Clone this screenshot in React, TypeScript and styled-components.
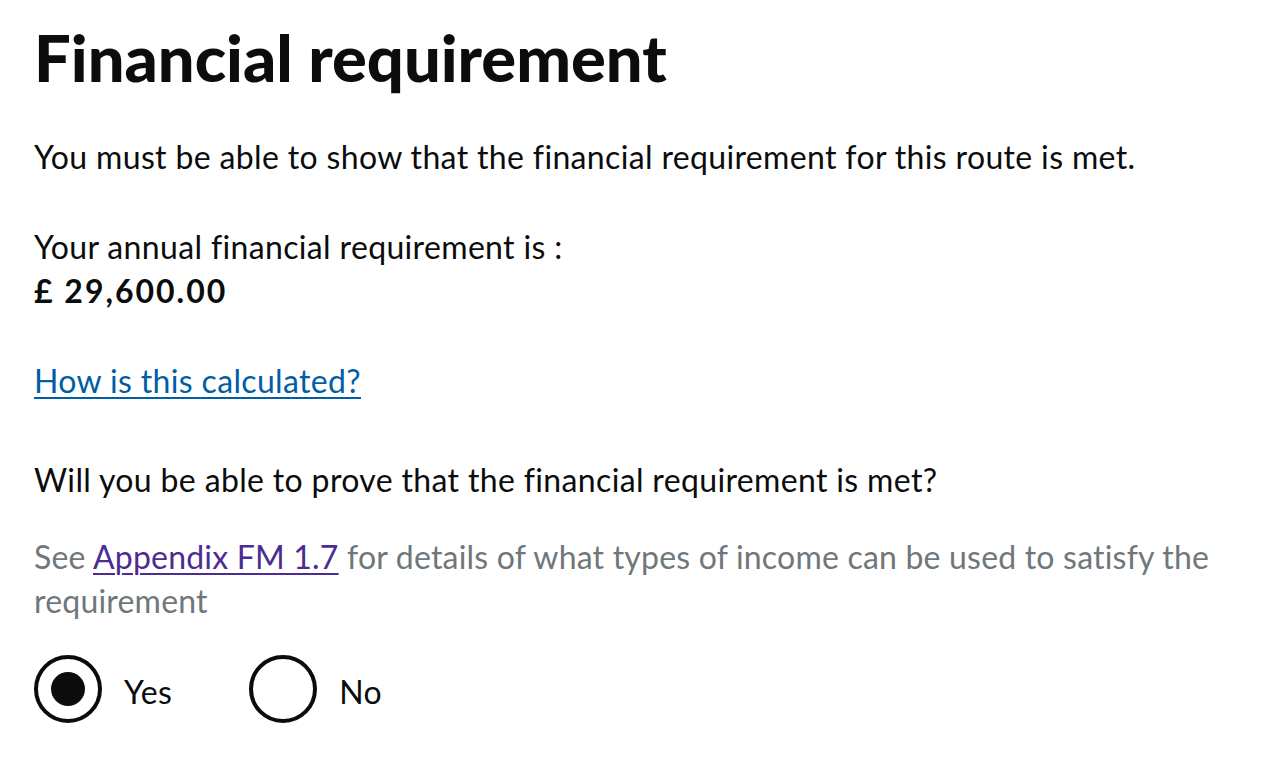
import styled, { createGlobalStyle } from 'styled-components';

const GlobalStyle = createGlobalStyle`
  html, body {
    margin: 0;
    padding: 0;
    background: #ffffff;
  }
  body {
    font-family: Lato, 'Noto Sans', sans-serif;
    color: #0b0c0c;
  }
`;

const Page = styled.main`
  width: 1280px;
  height: 770px;
  box-sizing: border-box;
  padding: 21px 34px 0;
  overflow: hidden;
  letter-spacing: 0.35px;
`;

const Heading = styled.h1`
  margin: 0 0 42px;
  font-size: 65px;
  line-height: 72px;
  font-weight: 900;
  letter-spacing: 0;
`;

const Body = styled.p<{ gap?: number }>`
  margin: 0 0 ${({ gap }) => gap ?? 0}px;
  font-size: 32px;
  line-height: 44px;
  font-weight: 400;
`;

const Amount = styled.strong`
  display: block;
  font-weight: 700;
  letter-spacing: 2px;
`;

const Link = styled.a<{ visited?: boolean }>`
  color: ${({ visited }) => (visited ? '#4c2c92' : '#005ea5')};
  text-decoration: underline;
  text-decoration-thickness: 2px;
  text-underline-offset: 4px;
`;

const Fieldset = styled.fieldset`
  margin: 0;
  padding: 0;
  border: 0;
`;

const Legend = styled.legend`
  padding: 0;
  margin: 0 0 33px;
  font-size: 32px;
  line-height: 44px;
`;

const Hint = styled.div`
  margin: 0 0 32px;
  font-size: 32px;
  line-height: 44px;
  letter-spacing: 0.2px;
  color: #6f777b;
`;

const Radios = styled.div`
  display: flex;
  gap: 77px;
`;

const RadioItem = styled.label`
  display: flex;
  align-items: center;
  gap: 22px;
  font-size: 32px;
  line-height: 44px;
`;

const RadioText = styled.span`
  padding-top: 6px;
`;

const RadioCircle = styled.span<{ checked?: boolean }>`
  position: relative;
  width: 68px;
  height: 68px;
  box-sizing: border-box;
  border: 4px solid #0b0c0c;
  border-radius: 50%;

  &::after {
    content: '';
    display: ${({ checked }) => (checked ? 'block' : 'none')};
    position: absolute;
    left: 13px;
    top: 13px;
    width: 34px;
    height: 34px;
    border-radius: 50%;
    background: #0b0c0c;
  }
`;

export default function App() {
  return (
    <Page>
      <GlobalStyle />
      <Heading>Financial requirement</Heading>
      <Body gap={46}>You must be able to show that the financial requirement for this route is met.</Body>
      <Body gap={46}>
        Your annual financial requirement is :
        <Amount>£ 29,600.00</Amount>
      </Body>
      <Body gap={55}>
        <Link href="#">How is this calculated?</Link>
      </Body>
      <Fieldset>
        <Legend>Will you be able to prove that the financial requirement is met?</Legend>
        <Hint>
          See <Link href="#" visited>Appendix FM 1.7</Link> for details of what types of income can be used to satisfy the
          requirement
        </Hint>
        <Radios>
          <RadioItem>
            <RadioCircle checked />
            <RadioText>Yes</RadioText>
          </RadioItem>
          <RadioItem>
            <RadioCircle />
            <RadioText>No</RadioText>
          </RadioItem>
        </Radios>
      </Fieldset>
    </Page>
  );
}
